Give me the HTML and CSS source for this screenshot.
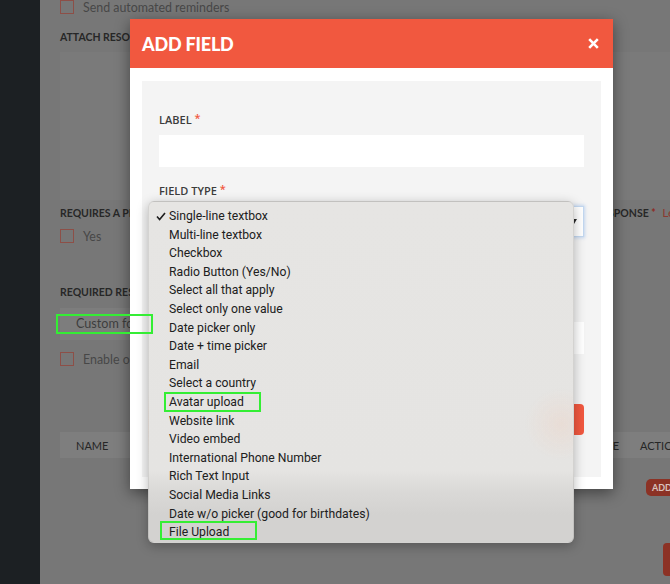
FILE: index.html
```html
<!DOCTYPE html>
<html lang="en">
<head>
<meta charset="utf-8">
<title>Add Field</title>
<link rel="stylesheet" href="styles.css">
</head>
<body>
<div class="app">
  <aside class="sidebar"></aside>
  <main class="page">
    <div class="check-row top"><span class="box"></span><span>Send automated reminders</span></div>
    <div class="field-label attach">ATTACH RESOURCES</div>
    <div class="textarea"></div>
    <div class="two-col">
      <div class="col">
        <div class="field-label">REQUIRES A PLAN</div>
        <div class="check-row yes"><span class="box"></span><span>Yes</span></div>
        <div class="field-label req-label">REQUIRED RESPONSE TYPE</div>
        <div class="fake-select">Custom form</div>
        <div class="check-row enable"><span class="box"></span><span>Enable options</span></div>
      </div>
      <div class="col right">
        <div class="field-label">REQUIRES A RESPONSE <span class="star">*</span> <span class="link">Learn more</span></div>
      </div>
    </div>
    <div class="table-head"><span class="th-name">NAME</span><span class="th-type">RESPONSE TYPE</span><span class="th-actions">ACTIONS</span></div>
    <div class="table-actions"><span class="add-btn">ADD</span></div>
    <div class="bottom-row"><span class="red-tab"></span></div>
  </main>
</div>

<div class="modal">
  <div class="modal-header">
    <h1 class="modal-title">ADD FIELD</h1>
    <svg class="close" width="11" height="11" viewBox="0 0 11 11"><path d="M1.2 1.2 L9.8 9.8 M9.8 1.2 L1.2 9.8" stroke="#fff" stroke-width="2.6" stroke-linecap="butt"/></svg>
  </div>
  <div class="modal-body">
    <div class="panel">
      <div class="m-label">LABEL <span class="m-star">*</span></div>
      <div class="m-input"></div>
      <div class="m-label ft">FIELD TYPE <span class="m-star">*</span></div>
      <div class="m-select"><span class="chev"></span></div>
      <div class="m-label ph">PLACEHOLDER</div>
      <div class="m-input"></div>
      <div class="m-actions"><span class="m-save">SAVE</span></div>
    </div>
  </div>
</div>

<ul class="menu">
  <li class="checked"><svg class="tick" width="10" height="9" viewBox="0 0 10 9"><path d="M1 4.6 L3.6 7.6 L9 1" fill="none" stroke="#1e1e1e" stroke-width="1.6"/></svg>Single-line textbox</li>
  <li>Multi-line textbox</li>
  <li>Checkbox</li>
  <li>Radio Button (Yes/No)</li>
  <li>Select all that apply</li>
  <li>Select only one value</li>
  <li>Date picker only</li>
  <li>Date + time picker</li>
  <li>Email</li>
  <li>Select a country</li>
  <li>Avatar upload</li>
  <li>Website link</li>
  <li>Video embed</li>
  <li>International Phone Number</li>
  <li>Rich Text Input</li>
  <li>Social Media Links</li>
  <li>Date w/o picker (good for birthdates)</li>
  <li>File Upload</li>
</ul>

<div class="mark mark-custom"></div>
<div class="mark mark-avatar"></div>
<div class="mark mark-file"></div>
</body>
</html>
```

FILE: styles.css
```css
* { box-sizing: border-box; }

html, body {
  margin: 0;
  padding: 0;
}

body {
  width: 670px;
  height: 584px;
  overflow: hidden;
  position: relative;
  background: #777777;
  font-family: Lato, "Open Sans", sans-serif;
}

.app {
  display: flex;
  height: 584px;
}

.sidebar {
  width: 40px;
  flex: none;
  background: #1c2023;
}

.page {
  width: 650px;
  flex: none;
  padding-left: 20px;
  background: #777777;
  color: #474747;
  font-size: 12px;
}

.check-row {
  display: flex;
  align-items: center;
  gap: 9px;
  height: 14px;
  color: #474747;
  font-size: 12.4px;
}

.box {
  width: 14px;
  height: 14px;
  border: 1px solid #8d4f47;
  flex: none;
}

.field-label {
  font-size: 10.5px;
  line-height: 12px;
  font-weight: 700;
  color: #272727;
  white-space: nowrap;
}

.attach { margin-top: 17px; }

.textarea {
  margin-top: 9px;
  height: 148px;
  background: #7a7a7a;
}

.two-col {
  display: grid;
  grid-template-columns: 440px 1fr;
}

.two-col .col > .field-label:first-child { margin-top: 7px; }

.yes { margin-top: 10px; }
.req-label { margin-top: 43px; }

.fake-select {
  margin-top: 10px;
  height: 32px;
  line-height: 32px;
  padding-left: 16px;
  background: #7d7d7d;
  color: #3d3d3d;
  font-size: 12.6px;
}

.enable { margin-top: 12px; }

.right .field-label { padding-left: 33px; }
.star { color: #8e2a20; }
.link { color: #8a3a30; font-weight: 400; font-size: 12px; margin-left: 4px; }

.table-head {
  margin-top: 66px;
  height: 26px;
  background: #7e7e7e;
  display: flex;
  align-items: center;
  font-size: 11px;
  color: #262626;
  padding-left: 16px;
}

.th-name { flex: 1; }
.th-type { width: 90px; text-align: right; }
.th-actions { width: 50px; margin-left: 21px; }

.table-actions {
  margin-top: 21px;
  display: flex;
  justify-content: flex-end;
}

.add-btn {
  width: 44px;
  height: 17px;
  line-height: 17px;
  padding-left: 6px;
  border-radius: 5px 0 0 5px;
  background: #8c3225;
  color: #d9c3bf;
  font-size: 9px;
  font-weight: 700;
}

.bottom-row {
  margin-top: 47px;
  display: flex;
  justify-content: flex-end;
}

.red-tab {
  width: 27px;
  height: 33px;
  border-radius: 4px 0 0 4px;
  background: #8c3225;
}

/* Modal */
.modal {
  position: absolute;
  left: 130px;
  top: 19px;
  width: 483px;
  height: 470px;
  background: #fff;
  box-shadow: 0 4px 14px rgba(0, 0, 0, 0.45);
  display: flex;
  flex-direction: column;
}

.modal-header {
  height: 49px;
  flex: none;
  background: #f1583f;
  display: flex;
  align-items: center;
  justify-content: space-between;
  padding: 0 14px 0 12px;
}

.modal-title {
  margin: 0;
  color: #fff;
  font-family: Lato, sans-serif;
  font-weight: 900;
  font-size: 18px;
  letter-spacing: -0.2px;
}

.close { display: block; }

.modal-body {
  flex: 1;
  padding: 13px 12px 12px;
  display: flex;
}

.panel {
  flex: 1;
  background: #f4f4f4;
  padding: 32px 17px 0;
  display: flex;
  flex-direction: column;
}

.m-label {
  font-family: "Open Sans", sans-serif;
  font-size: 11px;
  line-height: 13px;
  font-weight: 600;
  color: #3c3c3c;
}

.m-star {
  color: #f1583f;
  font-size: 11px;
  position: relative;
  top: -2px;
}

.m-input {
  margin-top: 9px;
  height: 32px;
  background: #fff;
}

.ft { margin-top: 17px; }

.m-select {
  margin-top: 9px;
  height: 31px;
  background: #fff;
  border: 1px solid #c3d8f0;
  box-shadow: 0 0 3px 1px rgba(140, 180, 235, 0.45);
  display: flex;
  align-items: center;
  justify-content: flex-end;
  padding-right: 6px;
}

.chev {
  width: 0;
  height: 0;
  border-left: 3px solid transparent;
  border-right: 3px solid transparent;
  border-top: 5px solid #2a2a2a;
}

.ph { margin-top: 63px; }

.m-actions {
  margin-top: 50px;
  display: flex;
  justify-content: flex-end;
}

.m-save {
  width: 90px;
  height: 31px;
  line-height: 31px;
  text-align: center;
  border-radius: 4px;
  background: #f1583f;
  color: #fff;
  font-weight: 700;
  font-size: 11px;
}

/* Native select popup */
.menu {
  position: absolute;
  left: 148px;
  top: 201px;
  width: 426px;
  height: 342px;
  margin: 0;
  padding: 5px 0 0;
  list-style: none;
  border-radius: 6px;
  border: 1px solid rgba(0, 0, 0, 0.08);
  background:
    radial-gradient(circle at 412px 222px, rgba(245, 195, 170, 0.22) 0, rgba(245, 195, 170, 0) 36px),
    linear-gradient(to bottom, #e6e5e3 0%, #e5e4e2 79%, #dad9d7 85%, #d3d2d0 92%, #d3d2d0 100%);
  box-shadow: 0 3px 12px rgba(0, 0, 0, 0.28);
  font-family: Roboto, "Liberation Sans", sans-serif;
  font-size: 12.2px;
  color: #202020;
}

.menu li {
  height: 18.6px;
  line-height: 18.6px;
  padding-left: 20px;
  position: relative;
  white-space: nowrap;
}

.tick {
  position: absolute;
  left: 7px;
  top: 5px;
}

/* annotation highlights */
.mark {
  position: absolute;
  border: 2px solid #34ee34;
}

.mark-custom { left: 56px; top: 314px; width: 97px; height: 20px; }
.mark-avatar { left: 164px; top: 392px; width: 97px; height: 20px; }
.mark-file { left: 160px; top: 521px; width: 97px; height: 19px; }
```
